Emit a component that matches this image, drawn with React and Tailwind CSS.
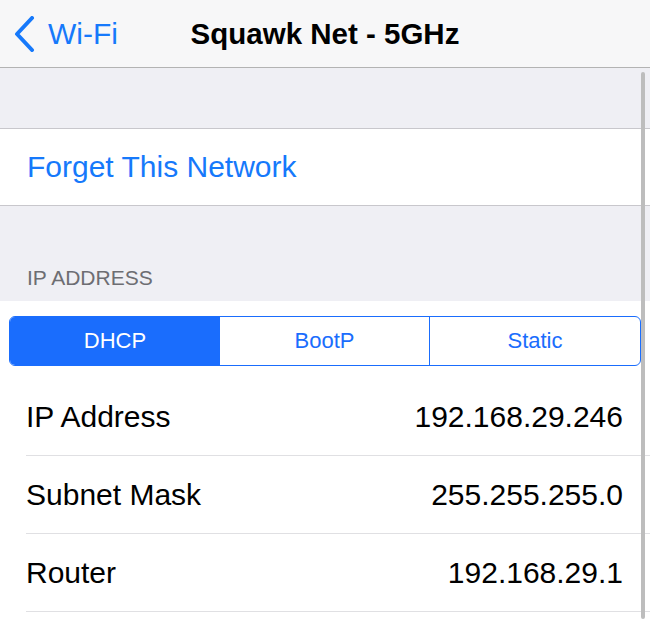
export default function App() {
  const font = { fontFamily: '"Liberation Sans", Arial, sans-serif' };
  const rows = [
    ["IP Address", "192.168.29.246"],
    ["Subnet Mask", "255.255.255.0"],
    ["Router", "192.168.29.1"],
  ];
  return (
    <div className="relative w-[650px] h-[619px] overflow-hidden bg-white" style={font}>
      {/* Nav bar */}
      <div className="grid grid-cols-[1fr_auto_1fr] items-center h-[68px] bg-[#f7f7f8] border-b border-[#b3b3b3]">
        <div className="flex items-center pl-[14px] text-[#1679fb]">
          <svg width="22" height="36" viewBox="0 0 22 36" className="mr-[12px]">
            <path d="M18 2 L3 18 L18 34" fill="none" stroke="#1679fb" strokeWidth="4" strokeLinecap="round" strokeLinejoin="round" />
          </svg>
          <span className="text-[30px] leading-none">Wi-Fi</span>
        </div>
        <div className="text-[29.5px] font-bold leading-none text-black">Squawk Net - 5GHz</div>
        <div />
      </div>

      {/* spacer */}
      <div className="h-[61px] bg-[#efeff4] border-b border-[#c8c7cc]" />

      {/* Forget row */}
      <div className="flex items-center h-[77px] bg-white border-b border-[#c8c7cc] pl-[27px]">
        <span className="text-[30px] text-[#1679fb] leading-none">Forget This Network</span>
      </div>

      {/* Section header */}
      <div className="flex items-end h-[95px] bg-[#efeff4] pl-[27px] pb-[13px]">
        <span className="text-[21px] text-[#6d6d72] leading-none">IP ADDRESS</span>
      </div>

      {/* White content */}
      <div className="bg-white pt-[15px]">
        <div className="mx-[9px] w-[632px] h-[50px] grid grid-cols-3 rounded-[6px] border-[1.5px] border-[#1a6dfd] overflow-hidden text-[22px] leading-none">
          <div className="flex items-center justify-center bg-[#1a6dfd] text-white">DHCP</div>
          <div className="flex items-center justify-center text-[#1a6dfd] border-r-[1.5px] border-[#1a6dfd]">BootP</div>
          <div className="flex items-center justify-center text-[#1a6dfd]">Static</div>
        </div>
        <div className="mt-[12px] pl-[26px]">
          {rows.map(([k, v]) => (
            <div key={k} className="flex items-center justify-between h-[78px] border-b border-[#e0e0e3] pr-[27px] text-[30px] text-black leading-none">
              <span>{k}</span>
              <span>{v}</span>
            </div>
          ))}
        </div>
      </div>

      {/* Scrollbar */}
      <div className="absolute right-[5px] top-[72px] bottom-0 w-[4px] rounded-full bg-[#bdbdbd]" />
    </div>
  );
}
